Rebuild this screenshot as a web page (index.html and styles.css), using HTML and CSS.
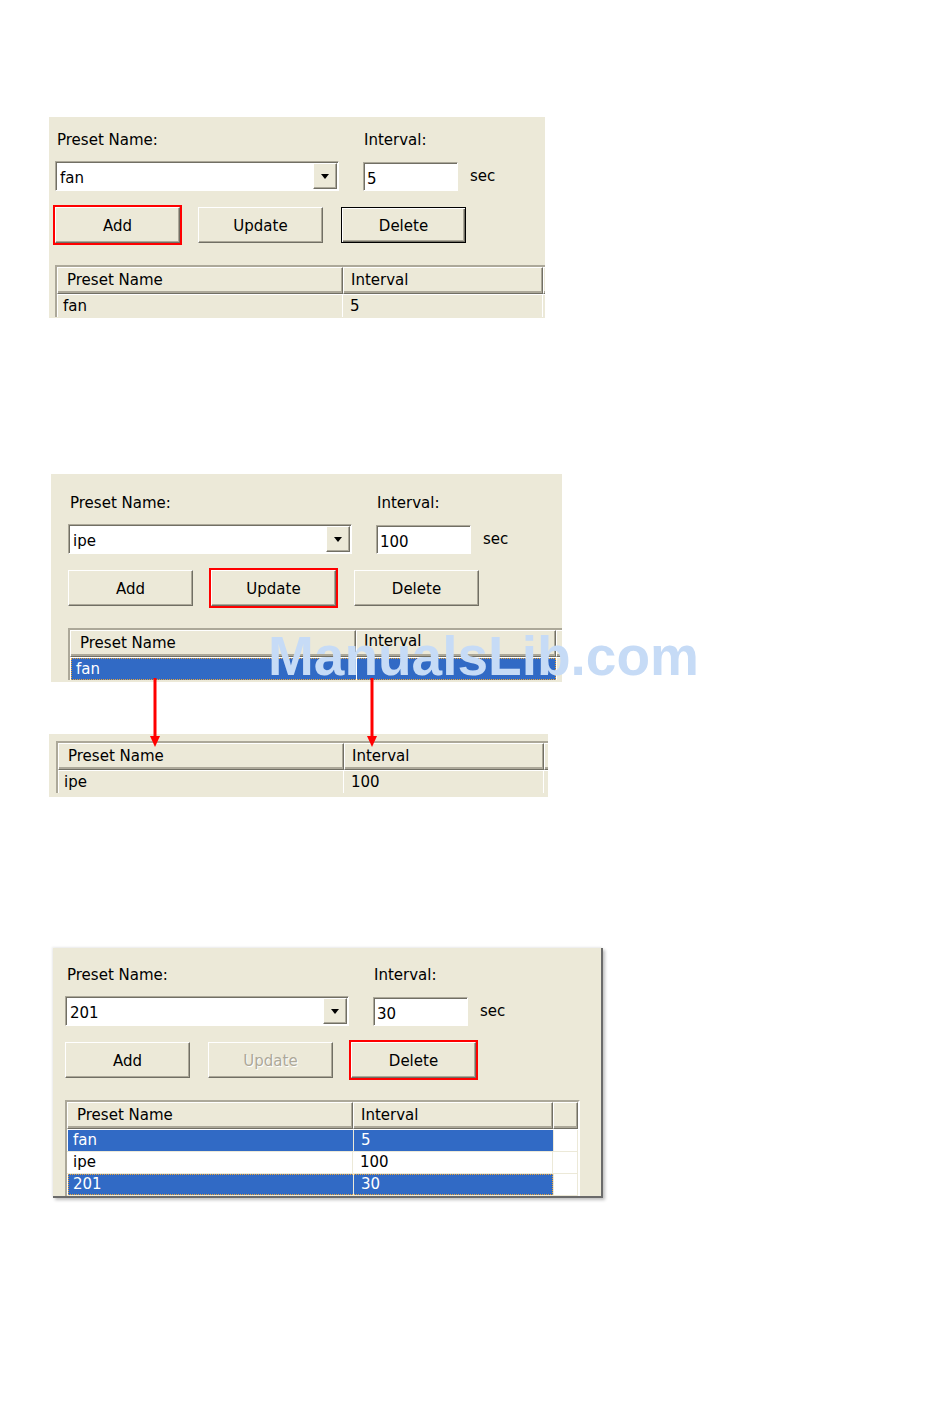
FILE: index.html
```html
<!DOCTYPE html>
<html lang="en">
<head>
    <meta charset="UTF-8">
    <meta name="viewport" content="width=device-width, initial-scale=1.0">
    <title>Preset Settings</title>
    <link rel="stylesheet" href="styles.css">
</head>
<body>
<div class="page">

    <!-- Step 1: add a preset -->
    <div class="panel p1">
        <div class="labels"><span>Preset Name:</span><span>Interval:</span></div>
        <div class="fields">
            <div class="combo"><span class="combo-text">fan</span><span class="combo-btn"><i class="caret"></i></span></div>
            <div class="field">5</div>
            <span class="unit">sec</span>
        </div>
        <div class="buttons">
            <button class="btn hl">Add</button>
            <button class="btn">Update</button>
            <button class="btn default">Delete</button>
        </div>
        <div class="list beige">
            <div class="list-head">
                <div class="hcell c1">Preset Name</div>
                <div class="hcell c2">Interval</div>
                <div class="hcell c3"></div>
            </div>
            <div class="row">
                <div class="cell c1">fan</div>
                <div class="cell c2">5</div>
            </div>
        </div>
    </div>

    <!-- Step 2: update a preset -->
    <div class="panel p2">
        <div class="labels"><span>Preset Name:</span><span>Interval:</span></div>
        <div class="fields">
            <div class="combo"><span class="combo-text">ipe</span><span class="combo-btn"><i class="caret"></i></span></div>
            <div class="field">100</div>
            <span class="unit">sec</span>
        </div>
        <div class="buttons">
            <button class="btn">Add</button>
            <button class="btn hl">Update</button>
            <button class="btn">Delete</button>
        </div>
        <div class="list">
            <div class="list-head">
                <div class="hcell c1">Preset Name</div>
                <div class="hcell c2 low">Interval</div>
                <div class="hcell c3"></div>
            </div>
            <div class="row selected focus">
                <div class="cell c1">fan</div>
                <div class="cell c2"></div>
            </div>
        </div>
    </div>

    <div class="panel p3">
        <div class="list beige">
            <div class="list-head">
                <div class="hcell c1">Preset Name</div>
                <div class="hcell c2">Interval</div>
                <div class="hcell c3"></div>
            </div>
            <div class="row">
                <div class="cell c1">ipe</div>
                <div class="cell c2">100</div>
            </div>
        </div>
    </div>

    <!-- Step 3: delete presets -->
    <div class="panel p4">
        <div class="labels"><span>Preset Name:</span><span>Interval:</span></div>
        <div class="fields">
            <div class="combo"><span class="combo-text">201</span><span class="combo-btn"><i class="caret"></i></span></div>
            <div class="field">30</div>
            <span class="unit">sec</span>
        </div>
        <div class="buttons">
            <button class="btn">Add</button>
            <button class="btn" disabled>Update</button>
            <button class="btn hl">Delete</button>
        </div>
        <div class="list white">
            <div class="list-head">
                <div class="hcell c1">Preset Name</div>
                <div class="hcell c2">Interval</div>
                <div class="hcell c3"></div>
            </div>
            <div class="row selected">
                <div class="cell c1">fan</div>
                <div class="cell c2">5</div>
                <div class="cell c3"></div>
            </div>
            <div class="row">
                <div class="cell c1">ipe</div>
                <div class="cell c2">100</div>
                <div class="cell c3"></div>
            </div>
            <div class="row selected focus">
                <div class="cell c1">201</div>
                <div class="cell c2">30</div>
                <div class="cell c3"></div>
            </div>
        </div>
    </div>

    <!-- annotations drawn over the screenshots -->
    <svg class="arrows" width="240" height="72" viewBox="0 0 240 72">
        <line x1="10" y1="0" x2="10" y2="60" stroke="#f00" stroke-width="3"/>
        <polygon points="5,58 15,58 10,69" fill="#f00"/>
        <line x1="227" y1="0" x2="227" y2="60" stroke="#f00" stroke-width="3"/>
        <polygon points="222,58 232,58 227,69" fill="#f00"/>
    </svg>
    <div class="watermark">ManualsLib.com</div>
</div>
</body>
</html>
```

FILE: styles.css
```css
body {
    margin: 0;
    background: #fff;
    font-family: "DejaVu Sans", Tahoma, sans-serif;
    font-size: 15px;
    color: #000;
}

.page {
    position: relative;
    height: 1420px;
    overflow: hidden;
}

.panel {
    background: #ece9d8;
    overflow: hidden;
    box-sizing: border-box;
}

.p1 {
    margin: 117px 0 0 49px;
    width: 496px;
    height: 201px;
    padding: 14px 0 0 6px;
}
.p2 {
    margin: 156px 0 0 51px;
    width: 511px;
    height: 208px;
    padding: 20px 0 0 17px;
}
.p3 {
    margin: 52px 0 0 49px;
    width: 499px;
    height: 63px;
    padding: 7px 0 0 7px;
}
.p4 {
    margin: 151px 0 0 53px;
    width: 550px;
    height: 250px;
    padding: 18px 0 0 12px;
    border-right: 2px solid #6b6b6b;
    border-bottom: 2px solid #6b6b6b;
    box-shadow: 2px 2px 3px rgba(0, 0, 0, 0.25), -1px -1px 2px rgba(0, 0, 0, 0.08);
}

.labels {
    display: grid;
    grid-template-columns: 307px auto;
    padding-left: 2px;
    height: 18px;
    line-height: 18px;
    margin-bottom: 12px;
}

.fields {
    display: flex;
    align-items: center;
    height: 30px;
    margin-bottom: 16px;
}

.combo {
    width: 284px;
    height: 30px;
    box-sizing: border-box;
    display: flex;
    align-items: center;
    background: #fff;
    border: 1px solid;
    border-color: #aca899 #fff #fff #aca899;
    box-shadow: inset 1px 1px #716f64;
    padding: 1px 1px 1px 4px;
}
.combo-text {
    flex: 1;
    padding-top: 4px;
}
.combo-btn {
    width: 24px;
    height: 26px;
    box-sizing: border-box;
    display: flex;
    align-items: center;
    justify-content: center;
    background: #ece9d8;
    border: 1px solid;
    border-color: #fff #716f64 #716f64 #fff;
    box-shadow: inset -1px -1px #aca899;
}
.caret {
    width: 0;
    height: 0;
    border-left: 4px solid transparent;
    border-right: 4px solid transparent;
    border-top: 5px solid #000;
}

.field {
    width: 95px;
    height: 29px;
    box-sizing: border-box;
    margin-left: 24px;
    background: #fff;
    border: 1px solid;
    border-color: #aca899 #fff #fff #aca899;
    box-shadow: inset 1px 1px #716f64;
    padding: 4px 0 0 3px;
    line-height: 24px;
}

.unit {
    margin-left: 12px;
}

.buttons {
    display: flex;
    gap: 18px;
    margin-bottom: 22px;
}

.btn {
    width: 125px;
    height: 36px;
    box-sizing: border-box;
    padding: 2px 0 0;
    font: inherit;
    color: #000;
    background: #ece9d8;
    border: 1px solid;
    border-color: #fff #716f64 #716f64 #fff;
    box-shadow: inset -1px -1px #aca899;
}
.btn.default {
    border-color: #000;
    box-shadow: inset 1px 1px #fff, inset -1px -1px #716f64, inset -2px -2px #aca899;
}
.btn:disabled {
    color: #aca899;
    text-shadow: 1px 1px #fff;
}
.hl {
    outline: 2px solid #f00;
    outline-offset: 0;
}

/* list view */
.list {
    width: 520px;
    box-sizing: border-box;
    border-top: 2px solid #aca899;
    border-left: 2px solid #aca899;
}
.list.white {
    width: 515px;
    background: #fff;
    border-right: 2px solid #fff;
}

.list-head {
    display: flex;
    height: 27px;
    border-bottom: 1px solid #fff;
}
.hcell {
    box-sizing: border-box;
    height: 27px;
    line-height: 25px;
    background: #ece9d8;
    border: 1px solid;
    border-color: #fff #716f64 #716f64 #fff;
    box-shadow: inset -1px -1px #aca899, inset 0 -2px #aca899;
}
.c1 {
    width: 286px;
    padding-left: 8px;
    box-sizing: border-box;
}
.c2 {
    width: 200px;
    padding-left: 7px;
    box-sizing: border-box;
}
.c3 {
    flex: 1;
}
.hcell.c1 {
    padding-left: 9px;
}
.hcell.low {
    line-height: 20px;
}

.row {
    display: flex;
    height: 22px;
    line-height: 22px;
}
.cell {
    box-sizing: border-box;
    border-right: 1px solid #fff;
    white-space: nowrap;
}
.cell.c1 {
    padding-left: 5px;
    border-left: 1px solid #fff;
}
.white .row {
    border-bottom: 1px solid #ece9d8;
    height: 21px;
    line-height: 21px;
}
.white .cell {
    border-right-color: #ece9d8;
}
.white .cell.c1 {
    border-left-color: #fff;
}

.row.selected .c1,
.row.selected .c2 {
    background: #316ac5;
    color: #fff;
}
.row.selected .c1 {
    width: 287px;
}
.row.focus {
    position: relative;
}
.row.focus::after {
    content: "";
    position: absolute;
    left: 1px;
    top: 0;
    width: 485px;
    height: 100%;
    box-sizing: border-box;
    border: 1px dotted #e8a33a;
    pointer-events: none;
}

.arrows {
    position: absolute;
    left: 145px;
    top: 678px;
}

.watermark {
    position: absolute;
    left: 268px;
    top: 629px;
    font-family: "Liberation Sans", Arial, sans-serif;
    font-weight: bold;
    font-size: 55px;
    line-height: 55px;
    color: #c6dbf6;
    pointer-events: none;
}
```
